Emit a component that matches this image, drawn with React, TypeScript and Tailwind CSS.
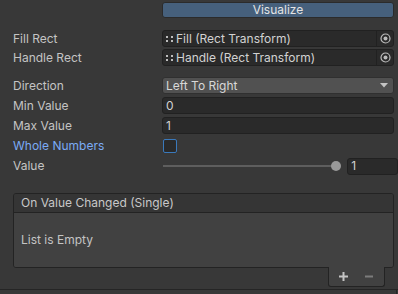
const font = { fontFamily: 'Inter, "Noto Sans", sans-serif' }

function Label({ text, blue }: { text: string; blue?: boolean }) {
  return (
    <div className={`w-[150px] shrink-0 pl-[13px] text-[12px] leading-none ${blue ? 'text-[#7babf5]' : 'text-[#c4c4c4]'}`}>
      {text}
    </div>
  )
}

function RectIcon() {
  return (
    <div className="grid grid-cols-2 gap-x-[3px] gap-y-[2px] w-[7px] mr-[3px] ml-[3px]">
      <span className="w-[2px] h-[2px] bg-[#bdbdbd]" />
      <span className="w-[2px] h-[2px] bg-[#bdbdbd]" />
      <span className="w-[2px] h-[2px] bg-[#bdbdbd]" />
      <span className="w-[2px] h-[2px] bg-[#bdbdbd]" />
    </div>
  )
}

function ObjectRow({ label, value, top }: { label: string; value: string; top: string }) {
  return (
    <div className={`flex items-center h-[17px] ${top}`}>
      <Label text={label} />
      <div className="flex-1 mr-[4px] ml-[12px] h-[17px] flex items-center bg-[#2a2a2a] border border-[#212121] rounded-[3px]">
        <RectIcon />
        <span className="text-[12px] text-[#d2d2d2] leading-none flex-1">{value}</span>
        <div className="w-[17px] h-full border-l border-[#212121] flex items-center justify-center">
          <svg width="11" height="11" viewBox="0 0 11 11">
            <circle cx="5.5" cy="5.5" r="4.5" fill="none" stroke="#bcbcbc" strokeWidth="1.2" />
            <circle cx="5.5" cy="5.5" r="2" fill="#bcbcbc" />
          </svg>
        </div>
      </div>
    </div>
  )
}

function NumberRow({ label, value, top }: { label: string; value: string; top: string }) {
  return (
    <div className={`flex items-center h-[17px] ${top}`}>
      <Label text={label} />
      <div className="flex-1 mr-[4px] ml-[12px] h-[17px] flex items-center px-[3px] bg-[#2a2a2a] border border-[#212121] rounded-[3px] text-[12px] text-[#d2d2d2] leading-none">
        {value}
      </div>
    </div>
  )
}

export default function App() {
  return (
    <div className="w-[398px] h-[294px] bg-[#383838] overflow-hidden flex flex-col relative" style={font}>
      <div className="flex mt-[2px]">
        <div className="w-[162px] shrink-0" />
        <div className="flex-1 mr-[4px] h-[16px] bg-[#46607c] border border-[#2b2b2b] rounded-[3px] flex items-center justify-center text-[12px] text-[#e4e4e4] leading-none">
          Visualize
        </div>
      </div>

      <ObjectRow label="Fill Rect" value="Fill (Rect Transform)" top="mt-[12px]" />
      <ObjectRow label="Handle Rect" value="Handle (Rect Transform)" top="mt-[2px]" />

      <div className="flex items-center h-[17px] mt-[11px]">
        <Label text="Direction" />
        <div className="flex-1 mr-[4px] ml-[12px] h-[17px] flex items-center justify-between px-[3px] bg-[#515151] border border-[#303030] rounded-[3px] text-[12px] text-[#d8d8d8] leading-none">
          <span>Left To Right</span>
          <svg width="8" height="5" viewBox="0 0 8 5" className="mr-[2px]">
            <path d="M0 0 H8 L4 4.5 Z" fill="#c4c4c4" />
          </svg>
        </div>
      </div>

      <NumberRow label="Min Value" value="0" top="mt-[3px]" />
      <NumberRow label="Max Value" value="1" top="mt-[3px]" />

      <div className="flex items-center h-[18px] mt-[3px]">
        <Label text="Whole Numbers" blue />
        <div className="ml-[13px] w-[14px] h-[14px] bg-[#2a2a2a] border border-[#3a79bb] rounded-[2px]" />
      </div>

      <div className="flex items-center h-[18px] mt-[2px]">
        <Label text="Value" />
        <div className="ml-[13px] w-[177px] relative h-[10px] flex items-center">
          <div className="w-full h-[2px] bg-[#5e5e5e]" />
          <div className="absolute right-[-2px] w-[10px] h-[10px] rounded-full bg-[#999999]" />
        </div>
        <div className="ml-[8px] w-[51px] h-[17px] flex items-center px-[3px] bg-[#2a2a2a] border border-[#212121] rounded-[3px] text-[12px] text-[#d2d2d2] leading-none">
          1
        </div>
      </div>

      <div className="mt-[18px] ml-[13px] mr-[4px]">
        <div className="border border-[#232323] rounded-[3px] overflow-hidden">
          <div className="h-[19px] bg-[#353535] border-b border-[#232323] flex items-center pl-[7px] text-[12px] text-[#c8c8c8] leading-none">
            On Value Changed (Single)
          </div>
          <div className="h-[54px] bg-[#414141] flex items-center pl-[7px] text-[12px] text-[#c4c4c4] leading-none">
            List is Empty
          </div>
        </div>
        <div className="flex justify-end pr-[9px] -mt-[1px]">
          <div className="w-[57px] h-[20px] bg-[#414141] border border-t-0 border-[#232323] rounded-b-[3px] flex items-center pl-[9px]">
            <svg width="11" height="11" viewBox="0 0 11 11">
              <path d="M5.5 1 V10 M1 5.5 H10" stroke="#c4c4c4" strokeWidth="2" />
            </svg>
            <svg width="10" height="11" viewBox="0 0 10 11" className="ml-[15px]">
              <path d="M1 5.5 H9" stroke="#7c7c7c" strokeWidth="2" />
            </svg>
          </div>
        </div>
      </div>

      <div className="mt-[2px] h-[1px] bg-[#252525] w-full" />
      <div className="flex-1 flex">
        <div className="w-[396px]" />
        <div className="w-[1px] bg-[#252525]" />
      </div>
    </div>
  )
}
